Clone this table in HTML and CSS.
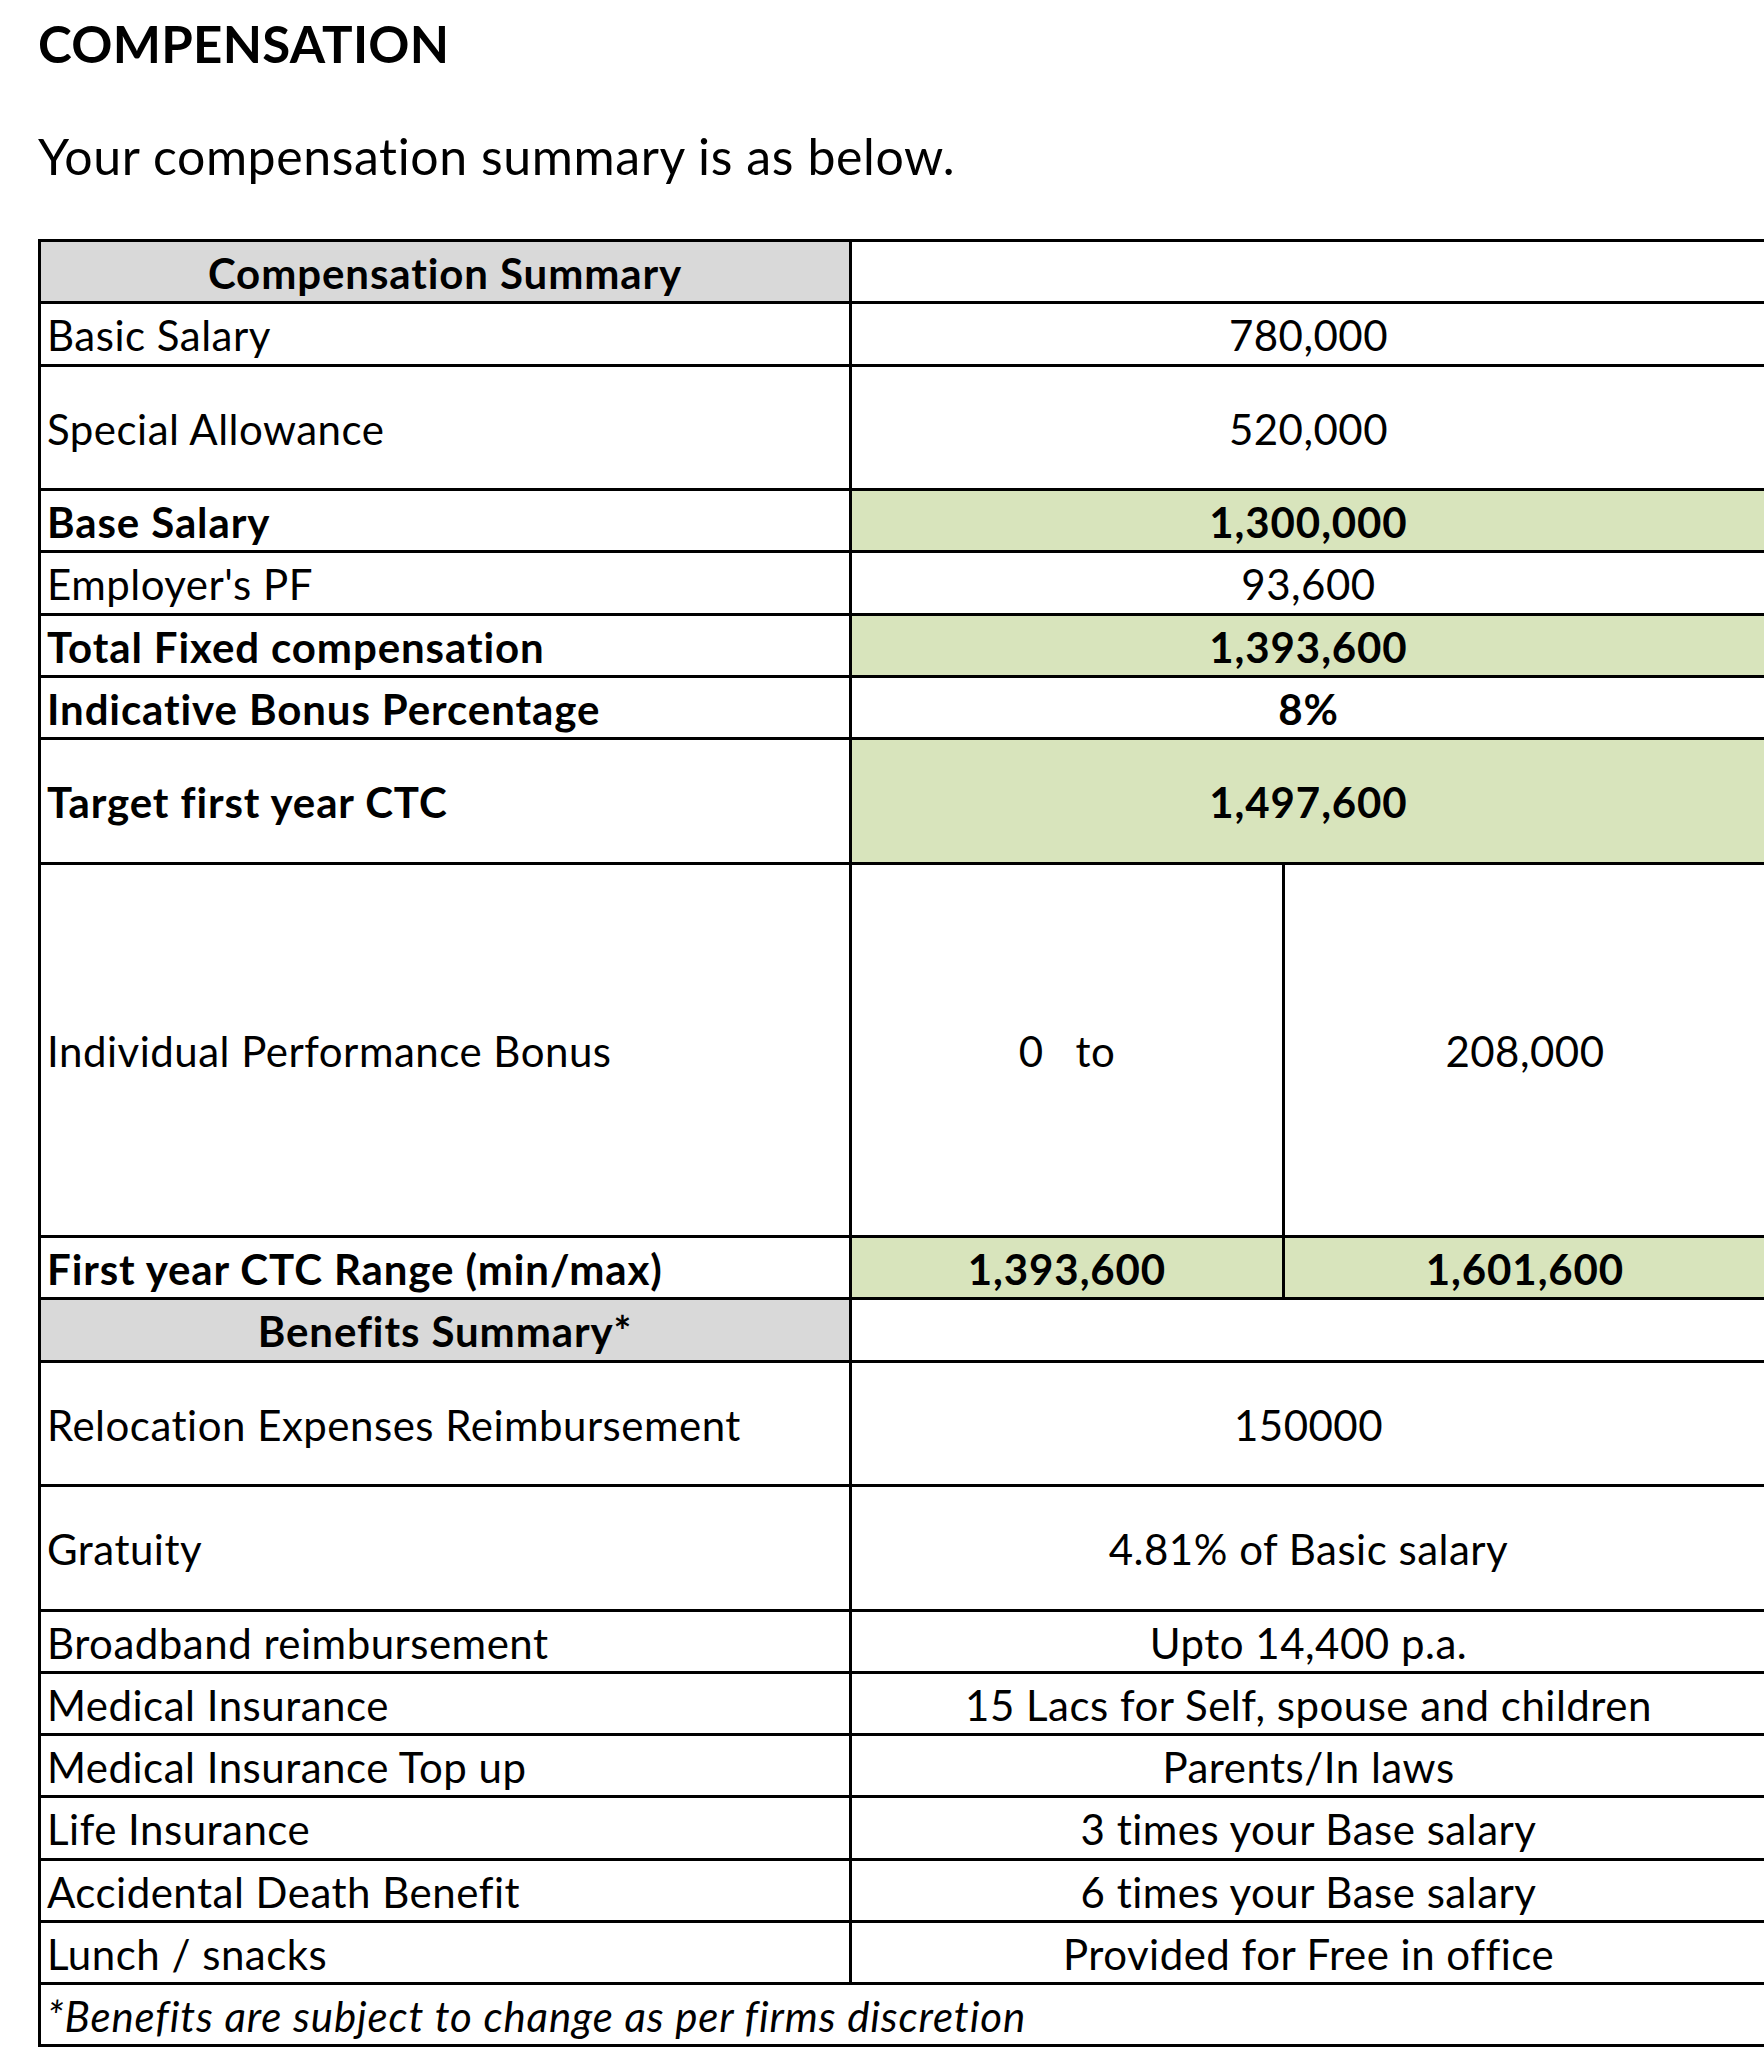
FILE: index.html
```html
<!DOCTYPE html>
<html lang="en">
<head>
<meta charset="utf-8">
<title>Compensation</title>
<link rel="stylesheet" href="styles.css">
</head>
<body>
<h1 class="title">COMPENSATION</h1>
<p class="intro">Your compensation summary is as below.</p>
<div class="sheet">
  <div class="cell head">Compensation Summary</div>
  <div class="cell span2"></div>

  <div class="cell label">Basic Salary</div>
  <div class="cell value span2">780,000</div>

  <div class="cell label">Special Allowance</div>
  <div class="cell value span2">520,000</div>

  <div class="cell label bold">Base Salary</div>
  <div class="cell value span2 bold green">1,300,000</div>

  <div class="cell label">Employer's PF</div>
  <div class="cell value span2">93,600</div>

  <div class="cell label bold">Total Fixed compensation</div>
  <div class="cell value span2 bold green">1,393,600</div>

  <div class="cell label bold">Indicative Bonus Percentage</div>
  <div class="cell value span2 bold">8%</div>

  <div class="cell label bold">Target first year CTC</div>
  <div class="cell value span2 bold green">1,497,600</div>

  <div class="cell label">Individual Performance Bonus</div>
  <div class="cell value"><span class="zero">0</span><span>to</span></div>
  <div class="cell value">208,000</div>

  <div class="cell label bold">First year CTC Range (min/max)</div>
  <div class="cell value bold green">1,393,600</div>
  <div class="cell value bold green">1,601,600</div>

  <div class="cell head">Benefits Summary*</div>
  <div class="cell span2"></div>

  <div class="cell label">Relocation Expenses Reimbursement</div>
  <div class="cell value span2">150000</div>

  <div class="cell label">Gratuity</div>
  <div class="cell value span2">4.81% of Basic salary</div>

  <div class="cell label">Broadband reimbursement</div>
  <div class="cell value span2">Upto 14,400 p.a.</div>

  <div class="cell label">Medical Insurance</div>
  <div class="cell value span2">15 Lacs for Self, spouse and children</div>

  <div class="cell label">Medical Insurance Top up</div>
  <div class="cell value span2">Parents/In laws</div>

  <div class="cell label">Life Insurance</div>
  <div class="cell value span2">3 times your Base salary</div>

  <div class="cell label">Accidental Death Benefit</div>
  <div class="cell value span2">6 times your Base salary</div>

  <div class="cell label">Lunch / snacks</div>
  <div class="cell value span2">Provided for Free in office</div>

  <div class="cell note span3">*Benefits are subject to change as per firms discretion</div>
</div>
</body>
</html>
```
FILE: styles.css
```css
html, body {
  margin: 0;
  padding: 0;
  background: #ffffff;
  overflow: hidden;
}

body {
  font-family: Lato, "Open Sans", "Liberation Sans", sans-serif;
  color: #000000;
  padding-left: 38px;
}

.title {
  margin: 0;
  padding-top: 16px;
  font-size: 51px;
  line-height: 56px;
  font-weight: 700;
  letter-spacing: 0.3px;
}

.intro {
  margin: 0;
  padding-top: 56px;
  font-size: 50px;
  line-height: 56px;
  font-weight: 400;
  letter-spacing: 0.6px;
}

.sheet {
  margin-top: 55px;
  width: 1730px;
  display: grid;
  grid-template-columns: 811px 433px 483px;
  grid-template-rows:
    62.25px 62.25px 124.5px 62.25px 62.25px 62.25px 62.25px 124.5px 373.5px 62.25px
    62.25px 124.5px 124.5px 62.25px 62.25px 62.25px 62.25px 62.25px 62.25px 62.25px;
  border-top: 3px solid #000;
  border-left: 3px solid #000;
  box-sizing: border-box;
}

.cell {
  box-sizing: border-box;
  border-right: 3px solid #000;
  border-bottom: 3px solid #000;
  display: flex;
  align-items: center;
  padding-top: 3px;
  font-size: 42px;
  line-height: 1;
  letter-spacing: 0.5px;
  white-space: nowrap;
}

.label {
  padding-left: 6px;
}

.value {
  justify-content: center;
}

.span2 {
  grid-column: span 2;
}

.span3 {
  grid-column: span 3;
}

.bold {
  font-weight: 700;
  letter-spacing: 0.9px;
}

.green {
  background: #d8e4bc;
}

.head {
  background: #d9d9d9;
  font-weight: 700;
  letter-spacing: 0.9px;
  justify-content: center;
}

.zero {
  margin-right: 32px;
}

.note {
  font-style: italic;
  letter-spacing: 0.9px;
  padding-left: 6px;
}
```
